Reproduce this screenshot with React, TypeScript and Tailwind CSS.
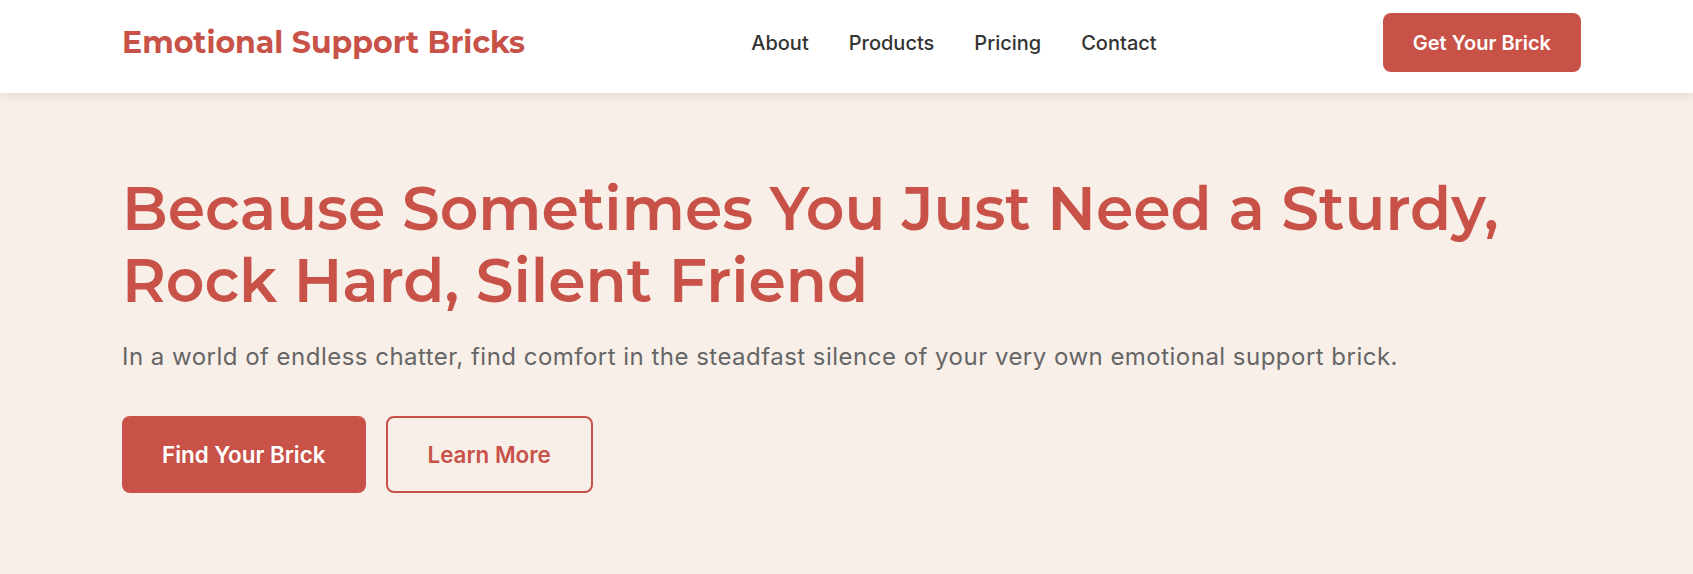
import React from "react";

const navLinks = ["About", "Products", "Pricing", "Contact"];

function Header() {
  return (
    <header className="relative z-10 bg-white shadow-[0_2px_10px_rgba(0,0,0,0.1)]">
      <div className="pt-[13px] pb-[21px] flex items-center justify-between pl-[122px] pr-[112px]">
        <a href="#" className="text-[30px] font-bold text-[#c85248] [font-family:Montserrat,Inter,sans-serif]">
          Emotional Support Bricks
        </a>
        <nav className="flex items-center gap-10">
          {navLinks.map((link) => (
            <a key={link} href="#" className="text-[20px] font-medium text-[#333333]">
              {link}
            </a>
          ))}
        </nav>
        <a
          href="#"
          className="h-[59px] px-[30px] flex items-center rounded-lg bg-[#c85248] text-white text-[20px] font-semibold"
        >
          Get Your Brick
        </a>
      </div>
    </header>
  );
}

function Hero() {
  return (
    <section className="bg-[#f8efe9] pl-[122px] pr-[112px] pt-20 pb-[85px]">
      <h1 className="text-[60px] leading-[72px] font-semibold text-[#c85248] [font-family:Montserrat,Inter,sans-serif]">
        Because Sometimes You Just Need a Sturdy,
        <br />
        Rock Hard, Silent Friend
      </h1>
      <p className="mt-[22px] text-[24px] tracking-[0.48px] text-[#666666]">
        In a world of endless chatter, find comfort in the steadfast silence of your very own emotional support brick.
      </p>
      <div className="mt-[41px] flex gap-5">
        <a
          href="#"
          className="h-[77px] px-10 flex items-center rounded-lg bg-[#c85248] text-white text-[22.4px] font-semibold"
        >
          Find Your Brick
        </a>
        <a
          href="#"
          className="h-[77px] px-10 flex items-center rounded-lg border-2 border-[#c85248] text-[#c85248] text-[22.4px] font-semibold"
        >
          Learn More
        </a>
      </div>
    </section>
  );
}

export default function App() {
  return (
    <div className="min-h-screen bg-white [font-family:Inter,sans-serif]">
      <Header />
      <Hero />
    </div>
  );
}
